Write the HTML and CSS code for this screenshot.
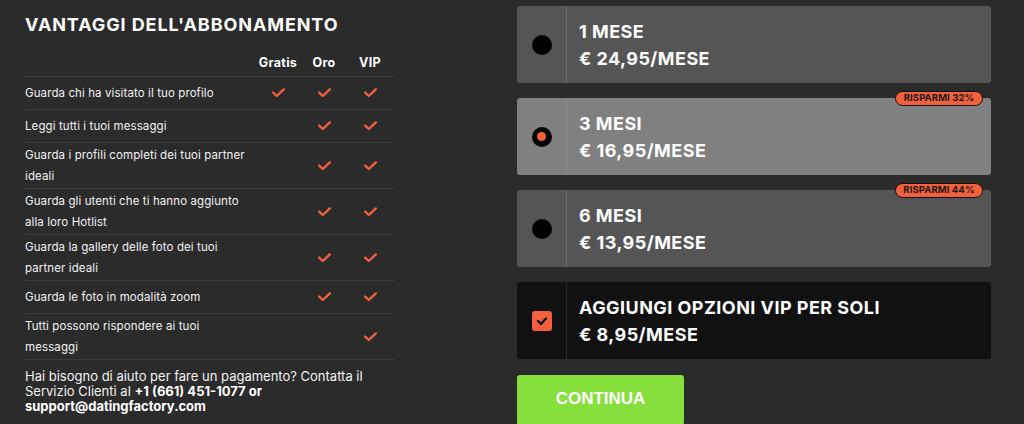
FILE: index.html
```html
<!DOCTYPE html>
<html lang="it">
<head>
<meta charset="utf-8">
<title>Abbonamento</title>
<link rel="stylesheet" href="styles.css">
</head>
<body>
<div class="page">
  <section class="benefits">
    <h2 class="title">VANTAGGI DELL'ABBONAMENTO</h2>
    <div class="table">
      <div class="row head">
        <div class="feat"></div>
        <div class="col">Gratis</div>
        <div class="col">Oro</div>
        <div class="col">VIP</div>
      </div>
      <div class="row">
        <div class="feat">Guarda chi ha visitato il tuo profilo</div>
        <div class="col"><svg class="chk" viewBox="0 0 13 10"><polyline points="1.2,4.6 4.8,8 11.8,1.4"/></svg></div>
        <div class="col"><svg class="chk" viewBox="0 0 13 10"><polyline points="1.2,4.6 4.8,8 11.8,1.4"/></svg></div>
        <div class="col"><svg class="chk" viewBox="0 0 13 10"><polyline points="1.2,4.6 4.8,8 11.8,1.4"/></svg></div>
      </div>
      <div class="row">
        <div class="feat">Leggi tutti i tuoi messaggi</div>
        <div class="col"></div>
        <div class="col"><svg class="chk" viewBox="0 0 13 10"><polyline points="1.2,4.6 4.8,8 11.8,1.4"/></svg></div>
        <div class="col"><svg class="chk" viewBox="0 0 13 10"><polyline points="1.2,4.6 4.8,8 11.8,1.4"/></svg></div>
      </div>
      <div class="row">
        <div class="feat">Guarda i profili completi dei tuoi partner<br>ideali</div>
        <div class="col"></div>
        <div class="col"><svg class="chk" viewBox="0 0 13 10"><polyline points="1.2,4.6 4.8,8 11.8,1.4"/></svg></div>
        <div class="col"><svg class="chk" viewBox="0 0 13 10"><polyline points="1.2,4.6 4.8,8 11.8,1.4"/></svg></div>
      </div>
      <div class="row">
        <div class="feat">Guarda gli utenti che ti hanno aggiunto<br>alla loro Hotlist</div>
        <div class="col"></div>
        <div class="col"><svg class="chk" viewBox="0 0 13 10"><polyline points="1.2,4.6 4.8,8 11.8,1.4"/></svg></div>
        <div class="col"><svg class="chk" viewBox="0 0 13 10"><polyline points="1.2,4.6 4.8,8 11.8,1.4"/></svg></div>
      </div>
      <div class="row">
        <div class="feat">Guarda la gallery delle foto dei tuoi<br>partner ideali</div>
        <div class="col"></div>
        <div class="col"><svg class="chk" viewBox="0 0 13 10"><polyline points="1.2,4.6 4.8,8 11.8,1.4"/></svg></div>
        <div class="col"><svg class="chk" viewBox="0 0 13 10"><polyline points="1.2,4.6 4.8,8 11.8,1.4"/></svg></div>
      </div>
      <div class="row">
        <div class="feat">Guarda le foto in modalità zoom</div>
        <div class="col"></div>
        <div class="col"><svg class="chk" viewBox="0 0 13 10"><polyline points="1.2,4.6 4.8,8 11.8,1.4"/></svg></div>
        <div class="col"><svg class="chk" viewBox="0 0 13 10"><polyline points="1.2,4.6 4.8,8 11.8,1.4"/></svg></div>
      </div>
      <div class="row">
        <div class="feat">Tutti possono rispondere ai tuoi<br>messaggi</div>
        <div class="col"></div>
        <div class="col"></div>
        <div class="col"><svg class="chk" viewBox="0 0 13 10"><polyline points="1.2,4.6 4.8,8 11.8,1.4"/></svg></div>
      </div>
    </div>
    <p class="help">Hai bisogno di aiuto per fare un pagamento? Contatta il<br>Servizio Clienti al <b>+1 (661) 451-1077 or</b><br><b>support@datingfactory.com</b></p>
  </section>

  <section class="plans">
    <div class="card">
      <div class="sel"><span class="radio"></span></div>
      <div class="info"><div>1 MESE</div><div>€ 24,95/MESE</div></div>
    </div>
    <div class="card active">
      <span class="badge">RISPARMI 32%</span>
      <div class="sel"><span class="radio on"></span></div>
      <div class="info"><div>3 MESI</div><div>€ 16,95/MESE</div></div>
    </div>
    <div class="card">
      <span class="badge">RISPARMI 44%</span>
      <div class="sel"><span class="radio"></span></div>
      <div class="info"><div>6 MESI</div><div>€ 13,95/MESE</div></div>
    </div>
    <div class="card vip">
      <div class="sel"><span class="box"><svg viewBox="0 0 12 10"><polyline points="2,5 5,8 10,2.5"/></svg></span></div>
      <div class="info"><div>AGGIUNGI OPZIONI VIP PER SOLI</div><div>€ 8,95/MESE</div></div>
    </div>
    <button class="cta">CONTINUA</button>
  </section>
</div>
</body>
</html>
```
FILE: styles.css
```css
* { box-sizing: border-box; }
html, body { margin: 0; padding: 0; }
body {
  background: #2b2b2b;
  color: #fff;
  font-family: Inter, "Open Sans", sans-serif;
  width: 1024px;
  height: 424px;
  overflow: hidden;
}
.page {
  display: flex;
  gap: 122px;
  padding-left: 25px;
}
.benefits { width: 370px; }
.title {
  margin: 14px 0 0;
  font-size: 18px;
  line-height: 22px;
  font-weight: 700;
  letter-spacing: 0.9px;
}
.table { margin-top: 16px; }
.row {
  display: flex;
  align-items: center;
  min-height: 33px;
  border-bottom: 1px solid #3c3c3c;
}
.row.head {
  min-height: 25px;
  padding-top: 3px;
  align-items: flex-start;
  font-size: 12.5px;
  line-height: 15px;
  font-weight: 700;
  letter-spacing: 0.3px;
}
.feat {
  flex: 0 0 230px;
  font-size: 11.5px;
  line-height: 21px;
  padding: 2px 0 1px;
  color: #f2f2f2;
  letter-spacing: 0.1px;
}
.col {
  flex: 0 0 46px;
  display: flex;
  justify-content: center;
}
.chk { width: 13px; height: 10px; display: block; }
.chk polyline {
  fill: none;
  stroke: #f2603c;
  stroke-width: 2.4;
  stroke-linecap: round;
  stroke-linejoin: round;
}
.help {
  margin: 9px 0 0;
  font-size: 13px;
  line-height: 15px;
  color: #f2f2f2;
}
.help b { font-weight: 700; color: #fff; }

.plans {
  width: 474px;
  padding-top: 6px;
  display: flex;
  flex-direction: column;
  gap: 15px;
}
.card {
  position: relative;
  height: 77px;
  display: flex;
  background: #555555;
  border-radius: 3px;
}
.card.active { background: #808080; }
.card.vip { background: #111111; }
.sel {
  flex: 0 0 50px;
  border-right: 1px solid #6a6a6a;
  display: flex;
  align-items: center;
  justify-content: center;
}
.card.active .sel { border-right-color: #8e8e8e; }
.card.vip .sel { border-right-color: #2a2a2a; }
.radio {
  width: 20px;
  height: 20px;
  border-radius: 50%;
  background: #000;
  display: flex;
  align-items: center;
  justify-content: center;
}
.radio.on::after {
  content: "";
  width: 9px;
  height: 9px;
  border-radius: 50%;
  background: #f2603c;
}
.box {
  width: 20px;
  height: 20px;
  border-radius: 3px;
  background: #f2603c;
  display: flex;
  align-items: center;
  justify-content: center;
}
.box svg { width: 12px; height: 10px; }
.box polyline {
  fill: none;
  stroke: #000;
  stroke-width: 2.2;
  stroke-linecap: round;
  stroke-linejoin: round;
}
.info {
  padding-left: 12px;
  display: flex;
  flex-direction: column;
  justify-content: center;
  font-size: 18px;
  line-height: 27px;
  font-weight: 700;
  letter-spacing: 0.45px;
}
.badge {
  position: absolute;
  top: -7px;
  right: 8px;
  width: 88px;
  height: 15px;
  border: 1.5px solid #111;
  border-radius: 8px;
  background: #f2603c;
  color: #1a1a1a;
  font-size: 9.5px;
  line-height: 12px;
  font-weight: 700;
  letter-spacing: 0.1px;
  text-align: center;
}
.cta {
  width: 167px;
  height: 50px;
  margin-top: 1px;
  border: 0;
  border-radius: 3px;
  background: #86df3c;
  color: #fff;
  font-family: "Liberation Sans", Arial, sans-serif;
  font-size: 17px;
  font-weight: 700;
  padding: 0 0 2px;
}
```
